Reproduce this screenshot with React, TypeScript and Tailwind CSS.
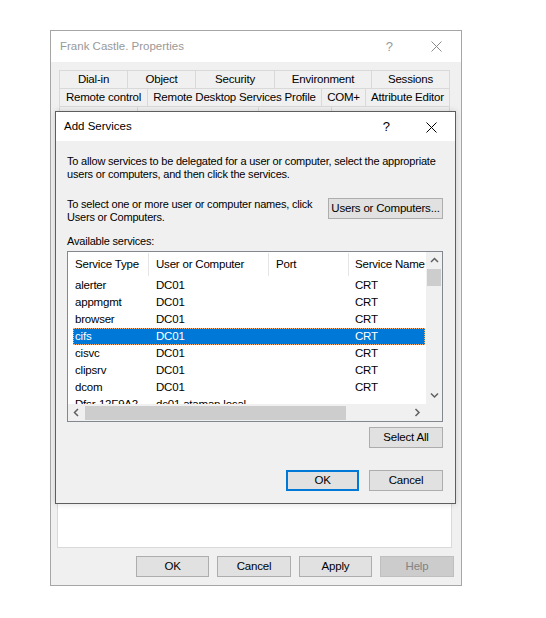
import React from "react";

const Btn = ({
  w,
  children,
  focus = false,
  disabled = false,
}: {
  w: string;
  children: React.ReactNode;
  focus?: boolean;
  disabled?: boolean;
}) => {
  let cls =
    "h-[21px] shrink-0 flex items-center justify-center text-[11.5px] leading-none whitespace-nowrap ";
  if (disabled) cls += "bg-[#cccccc] border border-[#bfbfbf] text-[#838383]";
  else if (focus) cls += "bg-[#e1e1e1] border-2 border-[#0078d7] text-black";
  else cls += "bg-[#e1e1e1] border border-[#adadad] text-black";
  return <div className={`${cls} ${w}`}>{children}</div>;
};

const XIcon = ({ color }: { color: string }) => (
  <svg width="11" height="11" viewBox="0 0 11 11">
    <path d="M0.5 0.5 L10.5 10.5 M10.5 0.5 L0.5 10.5" stroke={color} strokeWidth="1" fill="none" />
  </svg>
);

const Chevron = ({ dir }: { dir: "up" | "down" | "left" | "right" }) => {
  const d = {
    up: "M1 5 L4.5 1.5 L8 5",
    down: "M1 1.5 L4.5 5 L8 1.5",
    left: "M5 1 L1.5 4.5 L5 8",
    right: "M1.5 1 L5 4.5 L1.5 8",
  }[dir];
  const vertical = dir === "up" || dir === "down";
  return (
    <svg width={vertical ? 9 : 7} height={vertical ? 7 : 9} viewBox={vertical ? "0 0 9 7" : "0 0 7 9"}>
      <path d={d} stroke="#606060" strokeWidth="1.5" fill="none" />
    </svg>
  );
};

const Tab = ({ w, label, last = false }: { w: string; label: string; last?: boolean }) => (
  <div
    className={`${w} h-[18px] shrink-0 flex items-center justify-center pt-[1px] border-t border-l ${
      last ? "border-r" : ""
    } border-[#d9d9d9] bg-[#f0f0f0] text-[11.5px] text-black whitespace-nowrap overflow-hidden`}
  >
    {label}
  </div>
);

const rows = [
  ["alerter", "DC01", "", "CRT"],
  ["appmgmt", "DC01", "", "CRT"],
  ["browser", "DC01", "", "CRT"],
  ["cifs", "DC01", "", "CRT"],
  ["cisvc", "DC01", "", "CRT"],
  ["clipsrv", "DC01", "", "CRT"],
  ["dcom", "DC01", "", "CRT"],
  ["Dfsr-12F9A2", "dc01.ataman.local", "", ""],
];

export default function App() {
  return (
    <div className="relative w-[546px] h-[618px] bg-white font-['Liberation_Sans',Arial,sans-serif] text-[11px] tracking-[-0.2px] text-black">
      {/* Outer properties window */}
      <div className="pl-[50px] pt-[30px]">
        <div className="w-[412px] border border-[#a6a6a6] bg-[#f0f0f0] flex flex-col">
          <div className="h-[31px] shrink-0 bg-white flex items-center pl-[9px] text-[11.5px] tracking-normal text-[#999999]">
            <span>Frank Castle. Properties</span>
            <span className="ml-auto mr-[38px] text-[13px]">?</span>
            <span className="mr-[19px] flex">
              <XIcon color="#8a8a8a" />
            </span>
          </div>
          <div className="mt-[8px] ml-[8px] w-[391px] flex flex-col">
            <div className="flex">
              <Tab w="w-[68px]" label="Dial-in" />
              <Tab w="w-[68px]" label="Object" />
              <Tab w="w-[79px]" label="Security" />
              <Tab w="w-[97px]" label="Environment" />
              <Tab w="w-[79px]" label="Sessions" last />
            </div>
            <div className="flex">
              <Tab w="w-[88px]" label="Remote control" />
              <Tab w="w-[174px]" label="Remote Desktop Services Profile" />
              <Tab w="w-[44px]" label="COM+" />
              <Tab w="w-[85px]" label="Attribute Editor" last />
            </div>
            <div className="flex">
              <Tab w="w-[78px]" label="General" />
              <Tab w="w-[121px]" label="Published Certificates" />
              <Tab w="w-[73px]" label="Member Of" />
              <Tab w="w-[119px]" label="Password Replication" last />
            </div>
          </div>
          <div className="ml-[6px] w-[395px] h-[424px] shrink-0 bg-white border border-[#d9d9d9]" />
          <div className="mt-[8px] mb-[8px] flex justify-end gap-[8px] pr-[7px]">
            <Btn w="w-[73px]">OK</Btn>
            <Btn w="w-[74px]">Cancel</Btn>
            <Btn w="w-[73px]">Apply</Btn>
            <Btn w="w-[74px]" disabled>
              Help
            </Btn>
          </div>
        </div>
      </div>

      {/* Add Services modal dialog (overlay) */}
      <div className="absolute left-[55px] top-[111px] w-[401px] h-[393px] border border-[#5e5e5e] bg-[#f0f0f0] flex flex-col shadow-[0_0_6px_rgba(0,0,0,0.15)]">
        <div className="h-[29px] shrink-0 bg-white flex items-center pl-[8px] pt-[1px] text-[11.5px] tracking-normal">
          <span>Add Services</span>
          <span className="ml-auto mr-[36px] text-[13px]">?</span>
          <span className="mr-[18px] flex">
            <XIcon color="#000000" />
          </span>
        </div>
        <div className="pl-[11px] pr-[12px] flex flex-col">
          <p className="mt-[14px] leading-[13px] whitespace-nowrap">
            To allow services to be delegated for a user or computer, select the appropriate
            <br />
            users or computers, and then click the services.
          </p>
          <div className="mt-[17px] flex items-start">
            <p className="leading-[13px] whitespace-nowrap">
              To select one or more user or computer names, click
              <br />
              Users or Computers.
            </p>
            <div className="ml-auto mt-[0px]">
              <Btn w="w-[115px]">Users or Computers...</Btn>
            </div>
          </div>
          <p className="mt-[11px] leading-[13px]">Available services:</p>

          {/* List view */}
          <div className="mt-[3px] w-[376px] h-[171px] shrink-0 border border-[#828790] bg-white flex flex-col">
            <div className="flex flex-1 min-h-0">
              <div className="flex-1 min-w-0 overflow-hidden flex flex-col text-[11.5px]">
                <div className="h-[25px] flex shrink-0 items-stretch whitespace-nowrap">
                  <div className="w-[80px] shrink-0 pl-[7px] pt-[1px] flex items-center">Service Type</div>
                  <div className="w-[120px] shrink-0 pl-[7px] pt-[1px] flex items-center border-l border-[#e5e5e5] my-[1px]">
                    User or Computer
                  </div>
                  <div className="w-[80px] shrink-0 pl-[7px] pt-[1px] flex items-center border-l border-[#e5e5e5] my-[1px]">
                    Port
                  </div>
                  <div className="flex-1 pl-[6px] pt-[1px] flex items-center border-l border-[#e5e5e5] my-[1px]">
                    Service Name
                  </div>
                </div>
                <div className="pl-[5px] flex flex-col">
                  {rows.map((r, i) => {
                    const sel = r[0] === "cifs";
                    return (
                      <div
                        key={i}
                        className={`h-[17px] w-[352px] shrink-0 flex items-center whitespace-nowrap ${
                          sel
                            ? "bg-[#0078d7] text-white outline outline-1 outline-dotted outline-[#f7b27a] -outline-offset-1"
                            : ""
                        }`}
                      >
                        <div className="w-[75px] shrink-0 pl-[2px] overflow-hidden">{r[0]}</div>
                        <div className="w-[120px] shrink-0 pl-[8px] overflow-hidden">{r[1]}</div>
                        <div className="w-[80px] shrink-0">{r[2]}</div>
                        <div className="pl-[7px]">{r[3]}</div>
                      </div>
                    );
                  })}
                </div>
              </div>
              {/* vertical scrollbar */}
              <div className="w-[16px] shrink-0 bg-[#f0f0f0] flex flex-col items-center">
                <div className="h-[17px] flex items-center justify-center">
                  <Chevron dir="up" />
                </div>
                <div className="w-[14px] h-[17px] bg-[#cdcdcd]" />
                <div className="flex-1" />
                <div className="h-[17px] flex items-center justify-center">
                  <Chevron dir="down" />
                </div>
              </div>
            </div>
            {/* horizontal scrollbar */}
            <div className="h-[17px] flex bg-[#f0f0f0] shrink-0">
              <div className="w-[17px] flex items-center justify-center">
                <Chevron dir="left" />
              </div>
              <div className="flex-1 flex items-center">
                <div className="w-[261px] h-[14px] bg-[#cdcdcd]" />
              </div>
              <div className="w-[17px] flex items-center justify-center">
                <Chevron dir="right" />
              </div>
              <div className="w-[16px]" />
            </div>
          </div>

          <div className="mt-[5px] flex justify-end">
            <Btn w="w-[74px]">Select All</Btn>
          </div>
          <div className="mt-[22px] flex justify-end gap-[10px]">
            <Btn w="w-[73px]" focus>
              OK
            </Btn>
            <Btn w="w-[74px]">Cancel</Btn>
          </div>
        </div>
      </div>
    </div>
  );
}
